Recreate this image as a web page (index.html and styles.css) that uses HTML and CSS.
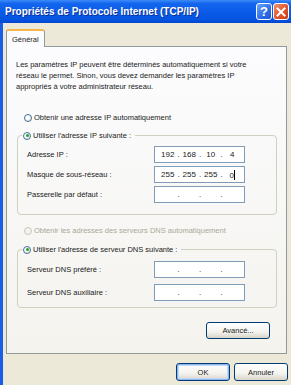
FILE: index.html
```html
<!DOCTYPE html>
<html lang="fr">
<head>
    <meta charset="UTF-8">
    <meta name="viewport" content="width=device-width, initial-scale=1.0">
    <title>Propriétés de Protocole Internet (TCP/IP)</title>
    <link rel="stylesheet" href="styles.css">
</head>
<body>
    <div class="window">
        <div class="titlebar">
            <span class="title">Propriétés de Protocole Internet (TCP/IP)</span>
            <div class="controls">
                <span class="ctl help">?</span>
                <span class="ctl close">
                    <svg width="10" height="10" viewBox="0 0 10 10">
                        <path d="M1.5 1.5 L8.5 8.5 M8.5 1.5 L1.5 8.5" stroke="#fff" stroke-width="2" stroke-linecap="square"/>
                    </svg>
                </span>
            </div>
        </div>

        <div class="client">
            <div class="tabs">
                <div class="tab">Général</div>
            </div>

            <div class="panel">
                <p class="intro">
                    Les paramètres IP peuvent être déterminés automatiquement si votre<br>
                    réseau le permet. Sinon, vous devez demander les paramètres IP<br>
                    appropriés à votre administrateur réseau.
                </p>

                <div class="radio first"><span class="dot"></span>Obtenir une adresse IP automatiquement</div>

                <fieldset class="group ip-group">
                    <legend><span class="radio"><span class="dot on"></span>Utiliser l'adresse IP suivante :</span></legend>
                    <div class="row">
                        <span class="label">Adresse IP :</span>
                        <div class="ipbox">
                            <span class="oct">192</span><span class="sep">.</span>
                            <span class="oct">168</span><span class="sep">.</span>
                            <span class="oct">10</span><span class="sep">.</span>
                            <span class="oct">4</span>
                        </div>
                    </div>
                    <div class="row">
                        <span class="label">Masque de sous-réseau :</span>
                        <div class="ipbox">
                            <span class="oct">255</span><span class="sep">.</span>
                            <span class="oct">255</span><span class="sep">.</span>
                            <span class="oct">255</span><span class="sep">.</span>
                            <span class="oct">0<span class="caret"></span></span>
                        </div>
                    </div>
                    <div class="row">
                        <span class="label">Passerelle par défaut :</span>
                        <div class="ipbox">
                            <span class="oct"></span><span class="sep">.</span>
                            <span class="oct"></span><span class="sep">.</span>
                            <span class="oct"></span><span class="sep">.</span>
                            <span class="oct"></span>
                        </div>
                    </div>
                </fieldset>

                <div class="radio disabled"><span class="dot"></span>Obtenir les adresses des serveurs DNS automatiquement</div>

                <fieldset class="group dns-group">
                    <legend><span class="radio"><span class="dot on"></span>Utiliser l'adresse de serveur DNS suivante :</span></legend>
                    <div class="row">
                        <span class="label">Serveur DNS préféré :</span>
                        <div class="ipbox">
                            <span class="oct"></span><span class="sep">.</span>
                            <span class="oct"></span><span class="sep">.</span>
                            <span class="oct"></span><span class="sep">.</span>
                            <span class="oct"></span>
                        </div>
                    </div>
                    <div class="row">
                        <span class="label">Serveur DNS auxiliaire :</span>
                        <div class="ipbox">
                            <span class="oct"></span><span class="sep">.</span>
                            <span class="oct"></span><span class="sep">.</span>
                            <span class="oct"></span><span class="sep">.</span>
                            <span class="oct"></span>
                        </div>
                    </div>
                </fieldset>

                <div class="advanced">
                    <button class="btn adv-btn">Avancé...</button>
                </div>
            </div>

            <div class="footer">
                <button class="btn default">OK</button>
                <button class="btn">Annuler</button>
            </div>
        </div>
    </div>
</body>
</html>
```

FILE: styles.css
```css
/* Reset */
* {
    margin: 0;
    padding: 0;
    box-sizing: border-box;
}

body {
    width: 291px;
    height: 385px;
    overflow: hidden;
    background: #ece9d8;
    font-family: "Liberation Sans", Arial, sans-serif;
    font-size: 7.5px;
    color: #1a1a1a;
}

.window {
    width: 291px;
    height: 385px;
    display: flex;
    flex-direction: column;
}

/* Title bar */
.titlebar {
    height: 23px;
    flex: none;
    display: flex;
    align-items: center;
    justify-content: space-between;
    padding: 0 2px 0 5px;
    background: linear-gradient(#3d8bf7 0%, #1466ee 15%, #0a5ce8 50%, #0553e0 85%, #0146cf 100%);
}

.title {
    color: #fff;
    font-size: 10px;
    font-weight: bold;
    text-shadow: 1px 1px 0 #0a2f9c;
    white-space: nowrap;
}

.controls {
    display: flex;
    gap: 1px;
}

.ctl {
    width: 16px;
    height: 17px;
    border: 1px solid #fff;
    border-radius: 3px;
    display: flex;
    align-items: center;
    justify-content: center;
    color: #fff;
}

.help {
    background: linear-gradient(135deg, #6ea4f8, #2c6ce8 60%, #1b55d6);
    font-size: 13px;
    font-weight: bold;
}

.close {
    background: linear-gradient(135deg, #f0906c, #e0552d 55%, #c83c15);
}

/* Client area */
.client {
    flex: 1;
    border-left: 3px solid #1a5ee8;
    padding: 6px 0 0 3px;
}

.tabs {
    display: flex;
    height: 18px;
    position: relative;
    z-index: 1;
}

.tab {
    width: 39px;
    height: 18px;
    border: 1px solid #919b9c;
    border-top: 2px solid #f7b448;
    border-bottom: none;
    border-radius: 3px 3px 0 0;
    background: #fcfcfe;
    padding: 4px 0 0 5px;
    line-height: 10px;
}

.panel {
    width: 281px;
    height: 308px;
    margin-top: -1px;
    border: 1px solid #919b9c;
    background: linear-gradient(#fcfcfe, #f4f3ee);
    padding: 12px 8px 0 9px;
}

.intro {
    line-height: 11px;
}

/* Radio buttons */
.radio {
    display: flex;
    align-items: center;
    height: 11px;
    line-height: 11px;
    white-space: nowrap;
}

.radio.first {
    margin: 20px 0 0 8px;
}

.radio.disabled {
    margin: 10px 0 0 8px;
    color: #aca899;
}

.dot {
    width: 8px;
    height: 8px;
    margin-right: 2px;
    border: 1px solid #45709c;
    border-radius: 50%;
    background: radial-gradient(circle at 40% 40%, #fff 30%, #dcdad0);
    position: relative;
    flex: none;
}

.disabled .dot {
    border-color: #c9c7ba;
    background: #f4f3ee;
}

.dot.on::after {
    content: "";
    position: absolute;
    left: 1.5px;
    top: 1.5px;
    width: 3px;
    height: 3px;
    border-radius: 50%;
    background: #21a121;
}

/* Group boxes */
.group {
    width: 260px;
    margin-left: 1px;
    border: 1px solid #d0d0bf;
    border-radius: 4px;
    padding: 5px 31px 11px 9px;
    display: flex;
    flex-direction: column;
    gap: 3px;
}

.ip-group {
    margin-top: 7px;
}

.dns-group {
    margin-top: 8px;
    padding-top: 6px;
    padding-bottom: 6px;
    gap: 6px;
}

.group legend {
    margin-left: -5px;
    padding: 0 4px 0 1px;
}

.row {
    display: flex;
    align-items: center;
    justify-content: space-between;
}

.ipbox {
    width: 91px;
    height: 17px;
    border: 1px solid #7f9db9;
    background: #fff;
    display: flex;
    align-items: center;
    padding: 0 3px 0 4px;
    font-size: 8px;
}

.oct {
    width: 18px;
    text-align: center;
    position: relative;
}

.sep {
    width: 4px;
    text-align: center;
}

.caret {
    display: inline-block;
    width: 1px;
    height: 10px;
    background: #000;
    vertical-align: -2px;
}

/* Buttons */
.btn {
    height: 17px;
    border: 1px solid #003c74;
    border-radius: 3px;
    background: linear-gradient(#fff, #f3f2ee 60%, #d8d5c8);
    font-family: "Liberation Sans", Arial, sans-serif;
    font-size: 7.5px;
    color: #1a1a1a;
}

.advanced {
    display: flex;
    justify-content: flex-end;
    margin: 14px 8px 0 0;
}

.adv-btn {
    width: 64px;
}

.footer {
    display: flex;
    justify-content: flex-end;
    gap: 4px;
    padding: 9px 3px 0 0;
}

.footer .btn {
    width: 54px;
    height: 18px;
}

.btn.default {
    box-shadow: inset 0 0 0 1px #8eb4f2, inset 0 0 0 2px #c4d8f8;
}
```
